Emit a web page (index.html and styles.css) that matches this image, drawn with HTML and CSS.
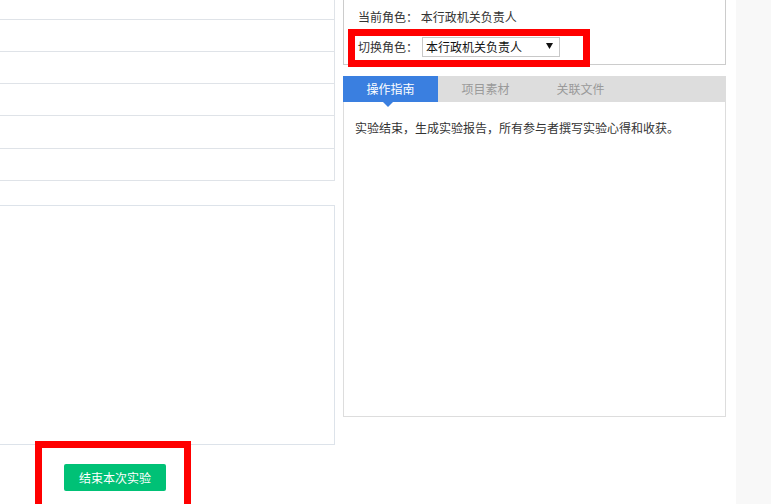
FILE: index.html
```html
<!DOCTYPE html>
<html lang="zh-CN">
<head>
  <meta charset="UTF-8" />
  <title>实验</title>
  <link rel="stylesheet" href="styles.css">
</head>
<body>
  <div class="page">
    <div class="left">
      <div class="rows">
        <div class="row"></div>
        <div class="row"></div>
        <div class="row"></div>
        <div class="row"></div>
        <div class="row"></div>
        <div class="row"></div>
      </div>
      <div class="panel"></div>
      <div class="actions">
        <button class="btn-end">结束本次实验</button>
        <div class="mark mark-end"></div>
      </div>
    </div>

    <div class="right">
      <div class="role-box">
        <div class="role-line">当前角色： 本行政机关负责人</div>
        <div class="role-line switch">
          <span>切换角色：</span>
          <div class="select">
            本行政机关负责人
            <svg class="arrow" width="7" height="6" viewBox="0 0 7 6"><path d="M0 0H7L3.5 6Z" fill="#111"/></svg>
          </div>
        </div>
        <div class="mark mark-role"></div>
      </div>

      <div class="tabs">
        <div class="tab active">操作指南</div>
        <div class="tab">项目素材</div>
        <div class="tab">关联文件</div>
      </div>
      <div class="tab-body">
        实验结束，生成实验报告，所有参与者撰写实验心得和收获。
      </div>
    </div>

    <div class="track"></div>
  </div>
</body>
</html>
```

FILE: styles.css
```css
body {
  margin: 0;
  background: #fff;
  font-family: "Microsoft YaHei", "Noto Sans CJK SC", sans-serif;
  font-size: 12px;
  color: #333;
  overflow: hidden;
}

.page {
  display: flex;
  height: 504px;
}

/* left column */
.left {
  width: 335px;
  position: relative;
}

.rows {
  margin-top: -12px;
  border-right: 1px solid #dfe3e8;
}

.row {
  height: 31px;
  border-bottom: 1px solid #dfe3e8;
}

.row:nth-child(5) {
  height: 32px;
}

.panel {
  margin-top: 24px;
  height: 238px;
  border: 1px solid #dde3ea;
  border-left: 0;
}

.actions {
  position: relative;
  padding: 19px 0 0 64px;
}

.btn-end {
  width: 102px;
  height: 27px;
  border: 0;
  border-radius: 2px;
  background: #00c176;
  color: #fff;
  font-family: inherit;
  font-size: 12px;
  padding: 0;
  cursor: pointer;
}

/* red annotation frames */
.mark {
  position: absolute;
  border: 7px solid #ff0000;
  pointer-events: none;
}

.mark-end {
  left: 35px;
  top: -4px;
  width: 142px;
  height: 56px;
}

/* right column */
.right {
  width: 383px;
  margin-left: 8px;
}

.role-box {
  position: relative;
  border: 1px solid #ccc;
  border-top: 0;
  padding: 8px 14px 7px;
}

.role-line {
  line-height: 18px;
  height: 18px;
}

.switch {
  display: flex;
  align-items: center;
  margin-top: 11px;
  height: 20px;
}

.select {
  position: relative;
  margin-left: 4px;
  width: 133px;
  height: 18px;
  line-height: 18px;
  padding-left: 3px;
  border: 1px solid #c8c8c8;
  color: #111;
  font-size: 12px;
}

.arrow {
  position: absolute;
  right: 6px;
  top: 5px;
}

.mark-role {
  left: 4px;
  top: 29px;
  width: 228px;
  height: 24px;
}

.tabs {
  display: flex;
  margin-top: 11px;
  height: 26px;
  background: #ddd;
}

.tab {
  position: relative;
  width: 95px;
  line-height: 26px;
  text-align: center;
  color: #999;
}

.tab.active {
  background: #3a7fe0;
  color: #fff;
}

.tab.active::after {
  content: "";
  position: absolute;
  left: 40px;
  bottom: -5px;
  border-left: 5px solid transparent;
  border-right: 5px solid transparent;
  border-top: 5px solid #3a7fe0;
}

.tab-body {
  height: 297px;
  padding: 17px 11px 0;
  border: 1px solid #ddd;
  border-top: 0;
  line-height: 18px;
}

.track {
  width: 35px;
  margin-left: 10px;
  background: #f8f8f8;
}
```
